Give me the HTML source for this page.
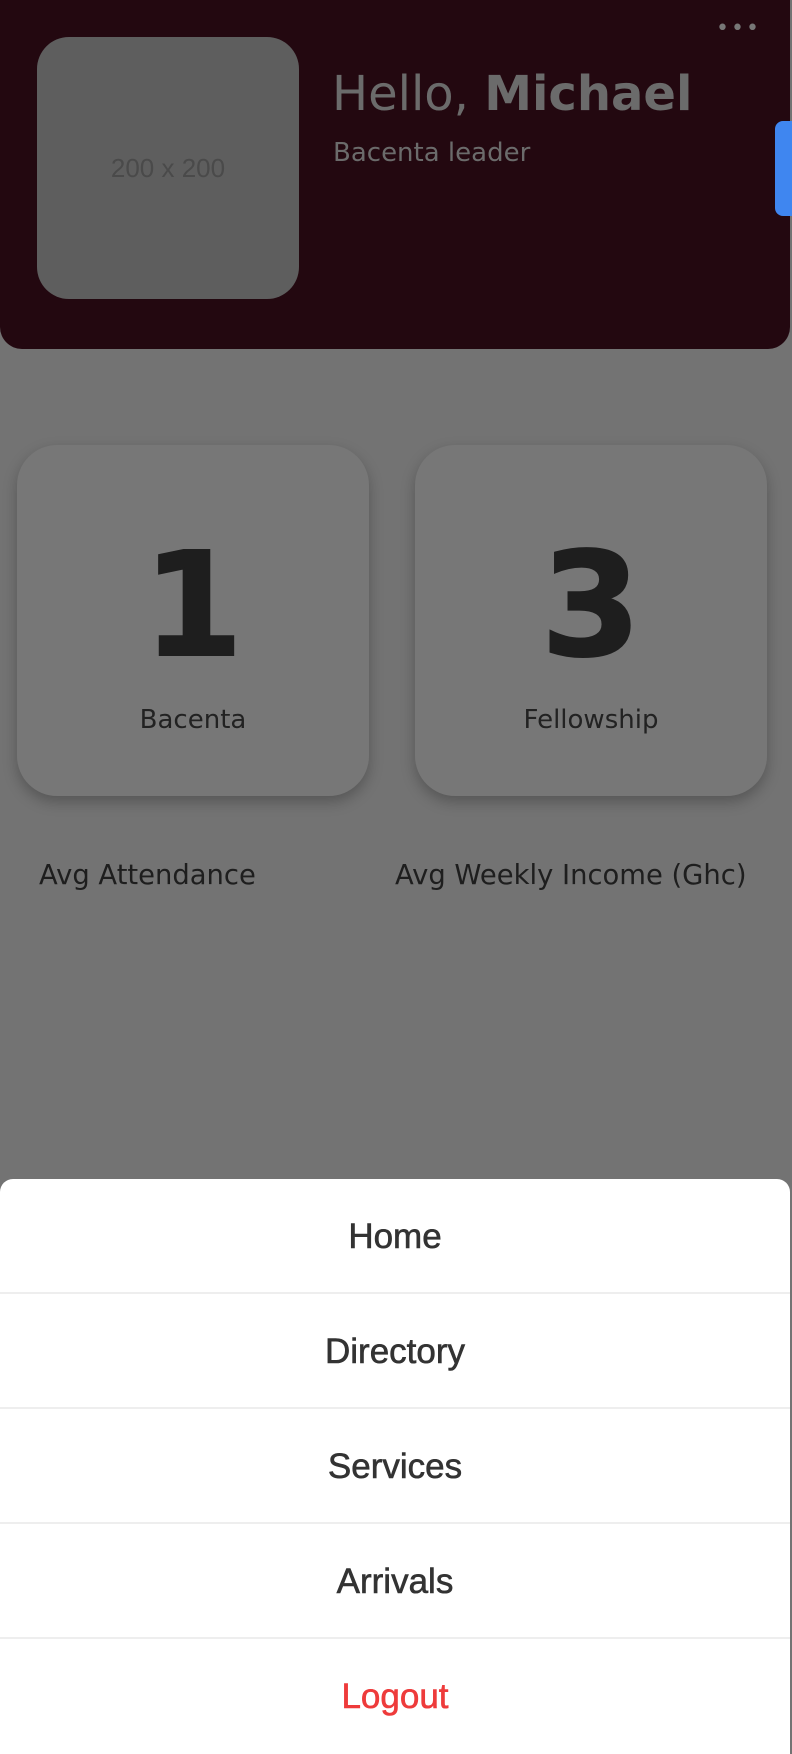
<!DOCTYPE html>
<html><head><meta charset="utf-8"><style>
*{margin:0;padding:0;box-sizing:border-box}
html,body{width:792px;height:1754px;overflow:hidden;background:#737373;font-family:"DejaVu Sans","Liberation Sans",sans-serif}
.hdr{position:absolute;left:0;top:0;width:790px;height:349px;background:#230810;border-radius:0 0 22px 22px}
.av{position:absolute;left:37px;top:37px;width:262px;height:262px;background:#5e5e5e;border-radius:32px;color:#4a4a4a;font-size:26px;text-align:center;line-height:262px;font-family:"Liberation Sans",sans-serif}
.dots{position:absolute;left:716px;top:16px;color:#777;font-size:22px;letter-spacing:2px}
.hello{position:absolute;left:332px;top:66px;color:#6b6b6b;font-size:48px;white-space:nowrap}
.role{position:absolute;left:333px;top:138px;color:#6b6b6b;font-size:26px}
.tab{position:absolute;left:775px;top:121px;width:20px;height:95px;background:#3f86f0;border-radius:8px 0 0 8px}
.card{position:absolute;top:445px;width:352px;height:351px;background:#777;border-radius:40px;box-shadow:0 6px 14px rgba(0,0,0,.25);text-align:center;color:#1e1e1e}
.card .n{font-size:144px;font-weight:bold;line-height:1;margin-top:88px;-webkit-text-stroke:2px #1e1e1e}
.card .l{font-size:26px;color:#222;margin-top:28px}
.avg{position:absolute;top:860px;font-size:27.4px;color:#1e1e1e}
.sheet{position:absolute;left:0;top:1179px;width:790px;height:575px;background:#fff;border-radius:13px 13px 0 0}
.it{height:115px;line-height:115px;text-align:center;font-family:"Liberation Sans",sans-serif;font-size:35px;color:#333;border-bottom:2px solid #eee;-webkit-text-stroke:0.6px #333}
.it.r{color:#ee3b3b;border-bottom:none;-webkit-text-stroke:0.6px #ee3b3b}
</style></head><body>
<div class="hdr"></div>
<div class="av">200 x 200</div>
<div class="dots">•••</div>
<div class="hello">Hello, <b>Michael</b></div>
<div class="role">Bacenta leader</div>
<div class="tab"></div>
<div class="card" style="left:17px"><div class="n">1</div><div class="l">Bacenta</div></div>
<div class="card" style="left:415px"><div class="n">3</div><div class="l">Fellowship</div></div>
<div class="avg" style="left:39px">Avg Attendance</div>
<div class="avg" style="left:395px">Avg Weekly Income (Ghc)</div>
<div class="sheet">
<div class="it">Home</div>
<div class="it">Directory</div>
<div class="it">Services</div>
<div class="it">Arrivals</div>
<div class="it r">Logout</div>
</div>
</body></html>
